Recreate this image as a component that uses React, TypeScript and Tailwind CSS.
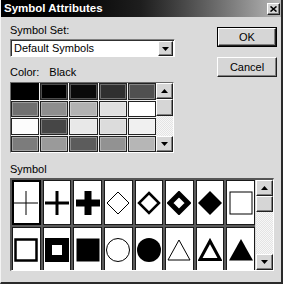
import React from "react";

const colors = [
  ["#000000", "#000000", "#0a0a0a", "#303030", "#505050"],
  ["#707070", "#8e8e8e", "#b2b2b2", "#e0e0e0", "#ffffff"],
  ["#fcfcfc", "#464646", "#e8e8e8", "#dcdcdc", "#f0f0f0"],
  ["#7c7c7c", "#9a9a9a", "#5c5c5c", "#929292", "#b6b6b6"],
];

function Arrow({ up }: { up?: boolean }) {
  return (
    <svg width="7" height="4" viewBox="0 0 7 4">
      <polygon points={up ? "3.5,0 7,4 0,4" : "0,0 7,0 3.5,4"} fill="#000" />
    </svg>
  );
}

const raised =
  "bg-[#d6d6d6] border border-t-white border-l-white border-r-[#202020] border-b-[#202020] shadow-[inset_-1px_-1px_#808080]";

function ScrollBar({ thumb }: { thumb: number }) {
  return (
    <div className="w-[17px] h-full flex flex-col bg-[#ececec] bg-[repeating-conic-gradient(#e4e4e4_0_25%,#f7f7f7_0_50%)] bg-[length:2px_2px]">
      <div className={`${raised} h-[16px] flex items-center justify-center`}>
        <Arrow up />
      </div>
      <div className={`${raised} border-t-[#f0f0f0]`} style={{ height: thumb }} />
      <div className="flex-1" />
      <div className={`${raised} h-[16px] flex items-center justify-center`}>
        <Arrow />
      </div>
    </div>
  );
}

function Sym({ i }: { i: number }) {
  const s = "#000";
  const shapes: React.ReactNode[] = [
    <g stroke={s} strokeWidth="1"><line x1="0" y1="12" x2="24" y2="12" /><line x1="12" y1="0" x2="12" y2="24" /></g>,
    <g stroke={s} strokeWidth="3"><line x1="0" y1="12" x2="24" y2="12" /><line x1="12" y1="0" x2="12" y2="24" /></g>,
    <g stroke={s} strokeWidth="7"><line x1="0" y1="12" x2="24" y2="12" /><line x1="12" y1="0" x2="12" y2="24" /></g>,
    <polygon points="12,1 23,12 12,23 1,12" fill="none" stroke={s} strokeWidth="1" />,
    <polygon points="12,2 22,12 12,22 2,12" fill="none" stroke={s} strokeWidth="2.5" />,
    <polygon points="12,3 21,12 12,21 3,12" fill="none" stroke={s} strokeWidth="5" />,
    <polygon points="12,0 24,12 12,24 0,12" fill={s} />,
    <rect x="1" y="1" width="22" height="22" fill="none" stroke={s} strokeWidth="1" />,
    <rect x="1.5" y="1.5" width="21" height="21" fill="none" stroke={s} strokeWidth="2.5" />,
    <rect x="3.5" y="3.5" width="17" height="17" fill="none" stroke={s} strokeWidth="7" />,
    <rect x="0.5" y="0.5" width="23" height="23" fill={s} />,
    <circle cx="12" cy="12" r="11.5" fill="none" stroke={s} strokeWidth="1" />,
    <circle cx="12" cy="12" r="12" fill={s} />,
    <polygon points="12,2 23,22 1,22" fill="none" stroke={s} strokeWidth="1" />,
    <polygon points="12,3 22,21.5 2,21.5" fill="none" stroke={s} strokeWidth="3" />,
    <polygon points="12,1 24,22.5 0,22.5" fill={s} />,
  ];
  return (
    <svg width="24" height="24" viewBox="0 0 24 24">
      {shapes[i]}
    </svg>
  );
}

export default function App() {
  return (
    <div className="w-[283px] h-[284px] overflow-hidden flex flex-col bg-[#dadada] border-l border-l-[#f4f4f4] border-r-2 border-r-[#2a2a2a] border-b-2 border-b-[#2a2a2a] font-['Liberation_Sans',Arial,sans-serif] text-[11px] text-black">
      <div className="h-[17px] shrink-0 flex items-center justify-between pl-[3px] pr-[1px] bg-linear-to-r from-[#000000] via-[#1e1e1e] to-[#b8b8b8]">
        <span className="text-white font-bold text-[11.5px] leading-none">
          Symbol Attributes
        </span>
        <div className={`${raised} w-[13px] h-[12px] flex items-center justify-center`}>
          <svg width="7" height="6" viewBox="0 0 7 6">
            <path d="M0.5 0.5 L6.5 5.5 M6.5 0.5 L0.5 5.5" stroke="#000" strokeWidth="1.6" />
          </svg>
        </div>
      </div>

      <div className="flex pl-[9px] pr-[4px]">
        <div className="w-[165px] flex flex-col">
          <div className="mt-[7px] leading-[13px]">Symbol Set:</div>
          <div className="mt-[2px] h-[18px] flex bg-white border border-t-[#808080] border-l-[#808080] border-r-white border-b-white shadow-[inset_1px_1px_#303030]">
            <div className="flex-1 pl-[3px] pt-[1px] flex items-center">Default Symbols</div>
            <div className={`${raised} w-[15px] h-[15px] mt-[1px] mr-px flex items-center justify-center`}>
              <Arrow />
            </div>
          </div>
          <div className="mt-[9px] leading-[13px] flex">
            <span>Color:</span>
            <span className="ml-[10px]">Black</span>
          </div>
          <div className="mt-[3px] w-[164px] h-[71px] flex border border-t-[#6a6a6a] border-l-[#6a6a6a] border-r-white border-b-white">
            <div className="w-[145px] grid grid-cols-5 grid-rows-4 gap-px bg-[#f2f2f2]">
              {colors.flatMap((row, r) =>
                row.map((c, k) => (
                  <div
                    key={`${r}-${k}`}
                    className={
                      r === 0 && k === 0
                        ? "border-2 border-black"
                        : "border border-[#222] shadow-[inset_0_0_0_1px_rgba(255,255,255,0.3)]"
                    }
                    style={{ backgroundColor: c }}
                  />
                ))
              )}
            </div>
            <ScrollBar thumb={17} />
          </div>
        </div>
        <div className="ml-auto w-[60px] flex flex-col gap-[10px] mt-[10px]">
          <div className="h-[20px] border border-black">
            <div className={`${raised} h-full flex items-center justify-center`}>OK</div>
          </div>
          <div className={`${raised} h-[20px] flex items-center justify-center`}>Cancel</div>
        </div>
      </div>

      <div className="flex flex-col pl-[9px] pr-[7px]">
        <div className="mt-[10px] leading-[13px]">Symbol</div>
        <div className="mt-[2px] h-[93px] flex border-t-2 border-l-2 border-t-[#555] border-l-[#555] border-r border-b border-r-white border-b-white overflow-hidden">
          <div className="flex-1 grid grid-cols-8 auto-rows-[45px] gap-[2px] bg-[#5a5a5a]">
            {Array.from({ length: 16 }, (_, i) => (
              <div
                key={i}
                className={`bg-white flex items-center justify-center ${
                  i === 0 ? "border-2 border-black" : "border border-[#1a1a1a]"
                }`}
              >
                <Sym i={i} />
              </div>
            ))}
          </div>
          <div className="ml-[1px]">
            <ScrollBar thumb={16} />
          </div>
        </div>
      </div>
    </div>
  );
}
